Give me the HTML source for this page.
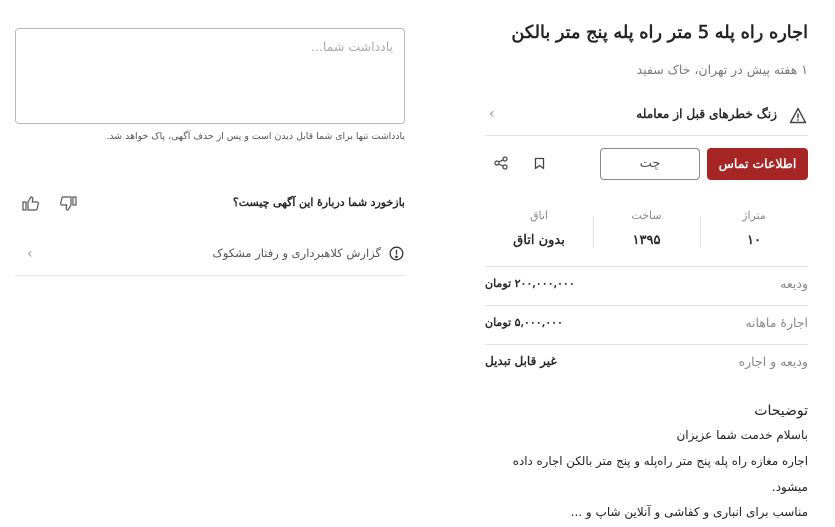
<!DOCTYPE html>
<html><head><meta charset="utf-8"><style>
body{margin:0;width:835px;height:527px;background:#fff;font-family:"DejaVu Sans",sans-serif;color:#222;position:relative;overflow:hidden}
.a{position:absolute;white-space:nowrap}
.r{direction:rtl}
.b{-webkit-text-stroke:0.4px currentColor}
.line{position:absolute;height:1px;background:#e2e2e2}
</style></head><body>
<!-- right column -->
<div class="a r b" style="right:27px;top:23px;font-size:17.7px;color:#222;-webkit-text-stroke:0.6px #222">اجاره راه پله 5 متر راه پله پنج متر بالکن</div>
<div class="a r" style="right:27px;top:62px;font-size:12.5px;color:#777">۱ هفته پیش در تهران، خاک سفید</div>
<svg class="a" style="left:789px;top:107px" width="18" height="17" viewBox="0 0 18 17"><path d="M9 1.5L16.5 15.5H1.5Z" fill="none" stroke="#444" stroke-width="1.4" stroke-linejoin="round"/><path d="M9 6.5v4.5" stroke="#444" stroke-width="1.5"/><circle cx="9" cy="13" r=".9" fill="#444"/></svg>
<div class="a r b" style="right:58px;top:107px;font-size:12.2px">زنگ خطرهای قبل از معامله</div>
<div class="a" style="left:489px;top:106px;font-size:14px;color:#999">‹</div>
<div class="line" style="left:485px;width:323px;top:135px"></div>
<div class="a r" style="left:707px;top:148px;width:101px;height:32px;background:#a62626;border-radius:4px;color:#fff;font-size:12.5px;text-align:center;line-height:32px;-webkit-text-stroke:0.4px #fff">اطلاعات تماس</div>
<div class="a r" style="left:600px;top:148px;width:98px;height:30px;border:1px solid #888;border-radius:4px;color:#555;font-size:13px;text-align:center;line-height:30px">چت</div>
<svg class="a" style="left:534px;top:157px" width="11" height="13" viewBox="0 0 11 13"><path d="M1.5 1.5h8v10l-4-3-4 3z" fill="none" stroke="#444" stroke-width="1.3" stroke-linejoin="round"/></svg>
<svg class="a" style="left:494px;top:156px" width="14" height="14" viewBox="0 0 14 14" fill="none" stroke="#444" stroke-width="1.2"><circle cx="3" cy="7" r="2"/><circle cx="11" cy="3" r="2"/><circle cx="11" cy="11" r="2"/><path d="M4.8 6l4.4-2.2M4.8 8l4.4 2.2"/></svg>
<div class="a r" style="left:700px;width:108px;top:209px;font-size:11px;color:#888;text-align:center">متراژ</div>
<div class="a r" style="left:593px;width:107px;top:209px;font-size:11px;color:#888;text-align:center">ساخت</div>
<div class="a r" style="left:485px;width:108px;top:209px;font-size:11px;color:#888;text-align:center">اتاق</div>
<div class="a r b" style="left:700px;width:108px;top:233px;font-size:13px;text-align:center">۱۰</div>
<div class="a r b" style="left:593px;width:107px;top:233px;font-size:13px;text-align:center">۱۳۹۵</div>
<div class="a r b" style="left:485px;width:108px;top:233px;font-size:13px;text-align:center">بدون اتاق</div>
<div class="a" style="left:700px;top:216px;width:1px;height:32px;background:#e2e2e2"></div>
<div class="a" style="left:593px;top:216px;width:1px;height:32px;background:#e2e2e2"></div>
<div class="line" style="left:485px;width:323px;top:266px"></div>
<div class="a r" style="right:27px;top:276px;font-size:12.5px;color:#888">ودیعه</div>
<div class="a r b" style="left:485px;top:277px;font-size:11px;letter-spacing:-0.5px">۲۰۰,۰۰۰,۰۰۰ تومان</div>
<div class="line" style="left:485px;width:323px;top:305px"></div>
<div class="a r" style="right:27px;top:315px;font-size:12.5px;color:#888">اجارهٔ ماهانه</div>
<div class="a r b" style="left:485px;top:316px;font-size:11px;letter-spacing:-0.5px">۵,۰۰۰,۰۰۰ تومان</div>
<div class="line" style="left:485px;width:323px;top:344px"></div>
<div class="a r" style="right:27px;top:354px;font-size:12.5px;color:#888">ودیعه و اجاره</div>
<div class="a r b" style="left:485px;top:354px;font-size:12px">غیر قابل تبدیل</div>
<div class="a r" style="right:27px;top:403px;font-size:14px">توضیحات</div>
<div class="a r" style="right:27px;top:428px;font-size:12px">باسلام خدمت شما عزیزان</div>
<div class="a r" style="right:27px;top:454px;font-size:11.8px">اجاره مغازه راه پله پنج متر راه‌پله و پنج متر بالکن اجاره داده</div>
<div class="a r" style="right:27px;top:480px;font-size:12px">میشود.</div>
<div class="a r" style="right:27px;top:505px;font-size:12px">مناسب برای انباری و کفاشی و آنلاین شاپ و ...</div>
<!-- left column -->
<div class="a" style="left:15px;top:28px;width:388px;height:94px;border:1px solid #bbb;border-radius:4px"></div>
<div class="a r" style="right:442px;top:39px;font-size:12.5px;color:#aaa">یادداشت شما...</div>
<div class="a r" style="right:430px;top:131px;font-size:9.4px;color:#555">یادداشت تنها برای شما قابل دیدن است و پس از حذف آگهی، پاک خواهد شد.</div>
<div class="a r b" style="right:430px;top:196px;font-size:11px">بازخورد شما دربارهٔ این آگهی چیست؟</div>
<svg class="a" style="left:22px;top:196px" width="17" height="15" viewBox="0 0 17 15" fill="none" stroke="#555" stroke-width="1.2"><rect x="1" y="6" width="3" height="8"/><path d="M6 6l3-5c1.2 0 2 .8 1.8 2L10.3 6H15c1 0 1.5.8 1.3 1.7l-1.3 5.5c-.2.6-.7.8-1.2.8H6z"/></svg>
<svg class="a" style="left:60px;top:196px" width="17" height="15" viewBox="0 0 17 15" fill="none" stroke="#555" stroke-width="1.2"><rect x="13" y="1" width="3" height="8"/><path d="M11 9l-3 5c-1.2 0-2-.8-1.8-2L6.7 9H2C1 9 .5 8.2.7 7.3L2 1.8C2.2 1.2 2.7 1 3.2 1H11z"/></svg>
<svg class="a" style="left:389px;top:246px" width="15" height="15" viewBox="0 0 15 15" fill="none" stroke="#333" stroke-width="1.3"><circle cx="7.5" cy="7.5" r="6.3"/><path d="M7.5 4v4.5"/><circle cx="7.5" cy="10.8" r=".7" fill="#333"/></svg>
<div class="a r" style="right:454px;top:246px;font-size:11.5px;color:#555">گزارش کلاهبرداری و رفتار مشکوک</div>
<div class="a" style="left:27px;top:246px;font-size:14px;color:#999">‹</div>
<div class="line" style="left:15px;width:390px;top:275px"></div>
</body></html>
